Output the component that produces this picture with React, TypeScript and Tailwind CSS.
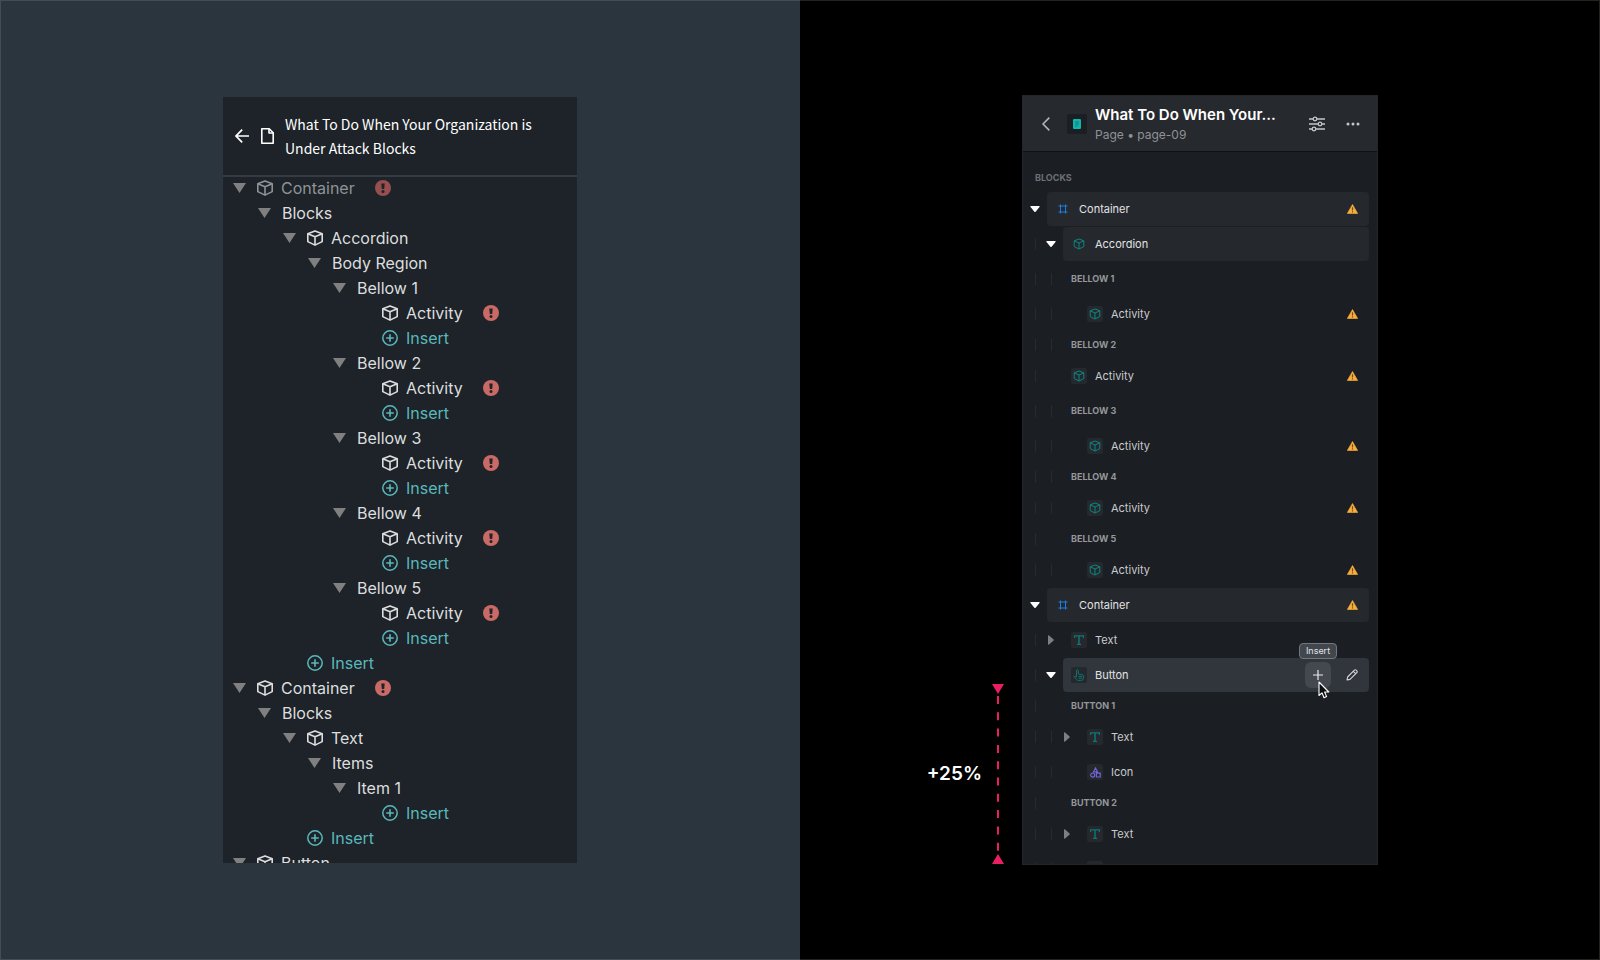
import type { ReactNode } from 'react'

type SvgProps = { className?: string }

const Cube = ({ className }: SvgProps) => (
  <svg viewBox="0 0 16 16" className={className} fill="none" stroke="currentColor" strokeWidth="1.6" strokeLinejoin="round" aria-hidden="true">
    <path d="M8 .9 15.2 3.7v7.900L8 15.100.8 11.600v-7.900z" />
    <path d="M.8 3.700 8 6.700l7.200-3M8 6.700v8.400" />
  </svg>
)

const TriangleDown = ({ className }: SvgProps) => (
  <svg viewBox="0 0 13 10" className={className} fill="currentColor" aria-hidden="true">
    <path d="M0 0h13L6.500 10z" />
  </svg>
)

const ErrorBadge = ({ dim }: { dim?: boolean }) => (
  <svg viewBox="0 0 16 16" className={dim ? 'ml-5 size-4 text-[#964f4e]' : 'ml-5 size-4 text-[#c96a66]'} role="img" aria-label="Error">
    <circle cx="8" cy="8" r="8" fill="currentColor" />
    <path d="M6.300 3.500h3.400L9.200 9H6.800z" fill="#1d2328" />
    <circle cx="8" cy="11.400" r="1.500" fill="#1d2328" />
  </svg>
)

type OldKind = 'block' | 'region' | 'leaf' | 'insert'
type OldItem = { level: number; kind: OldKind; label: string; error?: boolean; dim?: boolean }

const bellows: OldItem[] = [1, 2, 3, 4, 5].flatMap((n): OldItem[] => [
  { level: 4, kind: 'region', label: `Bellow ${n}` },
  { level: 5, kind: 'leaf', label: 'Activity', error: true },
  { level: 5, kind: 'insert', label: 'Insert' },
])

const oldItems: OldItem[] = [
  { level: 0, kind: 'block', label: 'Container', error: true, dim: true },
  { level: 1, kind: 'region', label: 'Blocks' },
  { level: 2, kind: 'block', label: 'Accordion' },
  { level: 3, kind: 'region', label: 'Body Region' },
  ...bellows,
  { level: 2, kind: 'insert', label: 'Insert' },
  { level: 0, kind: 'block', label: 'Container', error: true },
  { level: 1, kind: 'region', label: 'Blocks' },
  { level: 2, kind: 'block', label: 'Text' },
  { level: 3, kind: 'region', label: 'Items' },
  { level: 4, kind: 'region', label: 'Item 1' },
  { level: 5, kind: 'insert', label: 'Insert' },
  { level: 2, kind: 'insert', label: 'Insert' },
  { level: 0, kind: 'block', label: 'Button' },
]

const Slot = ({ children }: { children?: ReactNode }) => (
  <span className="flex w-[25px] shrink-0 items-center justify-center">{children}</span>
)

function OldRow({ item }: { item: OldItem }) {
  const { level, kind, label, error, dim } = item
  const indent = Array.from({ length: level }, (_, i) => <Slot key={i} />)
  if (kind === 'insert') {
    return (
      <li className="flex h-[25px] items-center pl-1">
        {indent}
        <Slot />
        <button type="button" className="flex items-center text-[#5ab8bc]">
          <Slot>
            <svg viewBox="0 0 16 16" className="size-4" fill="none" stroke="currentColor" strokeWidth="1.500" aria-hidden="true">
              <circle cx="8" cy="8" r="7.200" />
              <path d="M8 4.200v7.600M4.200 8h7.600" strokeWidth="1.600" />
            </svg>
          </Slot>
          <span className="pl-1">{label}</span>
        </button>
      </li>
    )
  }
  return (
    <li className={dim ? 'flex h-[25px] items-center pl-1 text-[#8f9396]' : 'flex h-[25px] items-center pl-1 text-[#dcdedf]'}>
      {indent}
      <Slot>
        {kind !== 'leaf' && (
          <button type="button" aria-label={`Collapse ${label}`} className="text-[#808080]">
            <TriangleDown className="h-[10px] w-[13px]" />
          </button>
        )}
      </Slot>
      {kind !== 'region' && (
        <Slot>
          <Cube className="size-4" />
        </Slot>
      )}
      <span className={kind === 'region' ? 'pl-[5px]' : 'pl-1'}>{label}</span>
      {error && <ErrorBadge dim={dim} />}
    </li>
  )
}

function OldPanel() {
  return (
    <div className="h-full w-[354px] overflow-hidden bg-[#1d2328] font-['Inter',sans-serif] text-[16px] leading-6">
      <header className="flex h-20 items-center border-b-2 border-[#343b43] pl-3">
        <button type="button" aria-label="Back" className="text-white">
          <svg viewBox="0 0 14 14" className="size-[14px]" fill="none" stroke="currentColor" strokeWidth="1.700" aria-hidden="true">
            <path d="M7.200.600 1 7l6.200 6.400M1 7h13" />
          </svg>
        </button>
        <svg viewBox="0 0 13 16" className="ml-3 h-4 w-[13px] text-white" fill="none" stroke="currentColor" strokeWidth="1.600" strokeLinejoin="round" aria-hidden="true">
          <path d="M.8.800h7.400l4 4v10.400H.8z" />
          <path d="M8 .800v4.200h4.200" />
        </svg>
        <h1 className="flex-1 pr-8 pl-[11px] font-['Noto_Sans_CJK_SC',sans-serif] text-[14px] leading-6 text-white">
          What To Do When Your Organization is Under Attack Blocks
        </h1>
      </header>
      <ul className="-mt-0.5">
        {oldItems.map((item, i) => (
          <OldRow key={i} item={item} />
        ))}
      </ul>
    </div>
  )
}

type IconName = 'frame' | 'cube' | 'text' | 'hand' | 'shapes'

function BlockIcon({ name }: { name: IconName }) {
  switch (name) {
    case 'frame':
      return (
        <svg viewBox="0 0 10 10" className="size-[10px] text-[#1f7fe0]" fill="none" stroke="currentColor" aria-hidden="true">
          <path d="M2.500.500v9M7.500.500v9M.500 2h9M.500 8h9" />
        </svg>
      )
    case 'cube':
      return (
        <svg viewBox="0 0 12 12" className="size-3 text-[#0f8580]" fill="none" stroke="currentColor" strokeLinejoin="round" aria-hidden="true">
          <path d="M6 1l4.800 1.800v5.800L6 11 1.200 8.600V2.800zM1.200 2.800 6 5l4.800-2.200M6 5v6" />
        </svg>
      )
    case 'text':
      return (
        <svg viewBox="0 0 10 10" className="size-[10px] text-[#0f7571]" fill="none" stroke="currentColor" aria-hidden="true">
          <path d="M.600 3V.800h8.800V3M3 9.400h4" strokeWidth="1.200" />
          <path d="M5 .800v8.600" strokeWidth="1.500" />
        </svg>
      )
    case 'hand':
      return (
        <svg viewBox="0 0 12 12" className="size-3 text-[#0f716d]" fill="none" stroke="currentColor" strokeLinejoin="round" aria-hidden="true">
          <path d="M3.500 8V1.600a.9.900 0 0 1 1.800 0V5l4.400.900c.800.200 1.200.700 1.100 1.500L10.200 10c-.2.900-.8 1.400-1.600 1.400H5.200c-.7 0-1.200-.3-1.600-.8L1 7.600c.5-.8 1.300-.8 2.500.4M5.500 7.500h4M5.500 9.300h3.500" />
        </svg>
      )
    case 'shapes':
      return (
        <svg viewBox="0 0 11 11" className="size-[11px] text-[#7163d6]" fill="none" stroke="currentColor" strokeWidth="1.200" aria-hidden="true">
          <path d="M5.500 1 7.500 4.800H3.500zM6.400 6.200h3.800v3.800H6.400z" />
          <circle cx="2.700" cy="8.100" r="2" />
        </svg>
      )
  }
}

const WarningIcon = () => (
  <svg viewBox="0 0 11 10" className="h-[10px] w-[11px]" role="img" aria-label="Warning">
    <path d="M5.500.500 10.700 9.500H.300z" fill="#f9ae3b" stroke="#f9ae3b" strokeWidth=".600" strokeLinejoin="round" />
    <path d="M5.500 3.200v3.200M5.500 7.300v1.200" stroke="#6b4c1d" strokeWidth="1.200" />
  </svg>
)

type NewItem = {
  level: number
  guides: number
  label?: string
  icon: IconName
  caret?: 'open' | 'closed'
  variant?: 'filled' | 'active'
  warn?: boolean
}
type Heading = { heading: string; guides: number; tall?: boolean }

const newItems: (NewItem | Heading)[] = [
  { level: 0, guides: 0, label: 'Container', icon: 'frame', caret: 'open', variant: 'filled', warn: true },
  { level: 1, guides: 1, label: 'Accordion', icon: 'cube', caret: 'open', variant: 'filled' },
  { heading: 'Bellow 1', guides: 2, tall: true },
  { level: 2, guides: 2, label: 'Activity', icon: 'cube', warn: true },
  { heading: 'Bellow 2', guides: 2 },
  { level: 1, guides: 1, label: 'Activity', icon: 'cube', warn: true },
  { heading: 'Bellow 3', guides: 2, tall: true },
  { level: 2, guides: 2, label: 'Activity', icon: 'cube', warn: true },
  { heading: 'Bellow 4', guides: 2 },
  { level: 2, guides: 2, label: 'Activity', icon: 'cube', warn: true },
  { heading: 'Bellow 5', guides: 1 },
  { level: 2, guides: 2, label: 'Activity', icon: 'cube', warn: true },
  { level: 0, guides: 0, label: 'Container', icon: 'frame', caret: 'open', variant: 'filled', warn: true },
  { level: 1, guides: 1, label: 'Text', icon: 'text', caret: 'closed' },
  { level: 1, guides: 1, label: 'Button', icon: 'hand', caret: 'open', variant: 'active' },
  { heading: 'Button 1', guides: 1 },
  { level: 2, guides: 2, label: 'Text', icon: 'text', caret: 'closed' },
  { level: 2, guides: 2, label: 'Icon', icon: 'shapes' },
  { heading: 'Button 2', guides: 1 },
  { level: 2, guides: 2, label: 'Text', icon: 'text', caret: 'closed' },
  { level: 2, guides: 2, icon: 'shapes' },
]

const Guides = ({ columns, lines }: { columns: number; lines: number }) => (
  <>
    {Array.from({ length: columns }, (_, i) => (
      <span key={i} className="flex w-4 shrink-0 justify-center">
        {i < lines && <span className="h-3 w-px bg-[#272b2f]" />}
      </span>
    ))}
  </>
)

const boxStyles = {
  plain: 'ml-1 flex h-[34px] flex-1 items-center rounded pr-[9px] pl-2 text-[#c9cbce]',
  filled: 'ml-1 flex h-[34px] flex-1 items-center rounded bg-[#25282d] pr-[9px] pl-2 text-[#e1e3e5]',
  active: 'ml-1 flex h-[34px] flex-1 items-center rounded bg-[#31353c] pr-[9px] pl-2 text-[#e1e3e5]',
}

const ActiveActions = () => (
  <>
    <span className="relative mr-[13px] flex">
      <button type="button" aria-label="Insert" className="flex size-[26px] items-center justify-center rounded-md bg-[#444950] text-[#e8eaec]">
        <svg viewBox="0 0 10 10" className="size-[10px]" stroke="currentColor" strokeWidth="1.200" aria-hidden="true">
          <path d="M5 0v10M0 5h10" />
        </svg>
      </button>
      <span role="tooltip" className="absolute bottom-full left-1/2 mb-[3px] flex h-4 w-[38px] -translate-x-1/2 items-center justify-center rounded border border-[#717780] bg-[#42474e] text-[9px] leading-3 text-[#e1e3e5]">
        Insert
      </span>
      <svg viewBox="0 0 12 18" className="absolute top-[19px] left-[13px] z-10 h-[18px] w-3" aria-hidden="true">
        <path d="M1 1v13.500l3-2.700 2 4.900 2.600-1.100-2-4.600h4.200z" fill="#0b0c0e" stroke="#fff" strokeWidth="1.100" strokeLinejoin="round" />
      </svg>
    </span>
    <button type="button" aria-label="Edit" className="flex w-4 justify-center text-[#d5d7da]">
      <svg viewBox="0 0 12 12" className="size-3" fill="none" stroke="currentColor" strokeWidth="1.100" strokeLinejoin="round" aria-hidden="true">
        <path d="M1 11l.6-3L8.400 1.200a1.300 1.300 0 0 1 1.800 0l.6.600a1.300 1.300 0 0 1 0 1.800L4 10.400zM7.300 2.300l2.400 2.400" />
      </svg>
    </button>
  </>
)

function NewRow({ item }: { item: NewItem }) {
  return (
    <li className="mb-px flex items-center pr-2 pl-1">
      <Guides columns={item.level} lines={item.guides} />
      <span className="flex w-4 shrink-0 justify-center">
        {item.caret === 'open' && (
          <button type="button" aria-label={`Collapse ${item.label}`} className="text-white">
            <svg viewBox="0 0 10 6" className="h-[6px] w-[10px]" fill="currentColor" aria-hidden="true">
              <path d="M1 0h8c.700 0 1 .600.500 1.100L5.600 5.700c-.4.400-.8.400-1.200 0L.5 1.100C0 .600.300 0 1 0z" />
            </svg>
          </button>
        )}
        {item.caret === 'closed' && (
          <button type="button" aria-label={`Expand ${item.label}`} className="text-[#7b8087]">
            <svg viewBox="0 0 6 10" className="h-[10px] w-[6px]" fill="currentColor" aria-hidden="true">
              <path d="M0 1v8c0 .700.600 1 1.100.500l4.500-3.900c.4-.4.400-.8 0-1.200L1.100.500C.600 0 0 .300 0 1z" />
            </svg>
          </button>
        )}
      </span>
      <div className={boxStyles[item.variant ?? 'plain']}>
        <span className="flex size-4 shrink-0 items-center justify-center rounded-xs bg-[#25282d]">
          <BlockIcon name={item.icon} />
        </span>
        <span className="flex-1 pl-2">{item.label}</span>
        {item.warn && (
          <span className="flex w-4 justify-center">
            <WarningIcon />
          </span>
        )}
        {item.variant === 'active' && <ActiveActions />}
      </div>
    </li>
  )
}

function HeadingRow({ item }: { item: Heading }) {
  return (
    <li className={item.tall ? 'mb-px flex h-[34px] items-center pl-1' : 'mb-px flex h-[26px] items-center pl-1'}>
      <Guides columns={2} lines={item.guides} />
      <h3 className="pl-3 text-[9px] font-bold text-[#94979b] uppercase">{item.heading}</h3>
    </li>
  )
}

function NewPanel() {
  return (
    <div className="h-full w-[356px] overflow-hidden border border-[#232629] bg-[#1b1e22] font-['Inter',sans-serif] text-[11px] leading-4">
      <header className="flex h-14 items-center border-b border-[#0f1113] bg-[#26292e] pr-4 pl-[19px]">
        <button type="button" aria-label="Back" className="text-[#b4b7bb]">
          <svg viewBox="0 0 8 14" className="h-[14px] w-2" fill="none" stroke="currentColor" strokeWidth="1.500" aria-hidden="true">
            <path d="M7.300.600 1 7l6.300 6.400" />
          </svg>
        </button>
        <span className="ml-[17px] flex size-5 items-center justify-center rounded-xs bg-[#1b1e22]">
          <svg viewBox="0 0 8 10" className="h-[10px] w-2" aria-hidden="true">
            <rect width="8" height="10" rx="1" fill="#12b5aa" />
            <path d="M2 3h4M2 5h4M2 7h2.500" stroke="#0b7f78" />
          </svg>
        </span>
        <div className="flex-1 pt-0.5 pl-2">
          <h2 className="text-[15px] leading-5 font-semibold text-white">What To Do When Your...</h2>
          <p className="text-[12px] leading-5 text-[#8f9297]">Page • page-09</p>
        </div>
        <button type="button" aria-label="Settings" className="text-[#c4c7ca]">
          <svg viewBox="0 0 16 16" className="size-4" fill="none" stroke="currentColor" strokeWidth="1.300" aria-hidden="true">
            <path d="M0 3h4M8 3h8M0 8h9M13 8h3M0 13h3M7 13h9" />
            <circle cx="6" cy="3" r="1.800" />
            <circle cx="11" cy="8" r="1.800" />
            <circle cx="5" cy="13" r="1.800" />
          </svg>
        </button>
        <button type="button" aria-label="More" className="ml-5 text-[#c4c7ca]">
          <svg viewBox="0 0 16 16" className="size-4" fill="currentColor" aria-hidden="true">
            <circle cx="3" cy="8" r="1.500" />
            <circle cx="8" cy="8" r="1.500" />
            <circle cx="13" cy="8" r="1.500" />
          </svg>
        </button>
      </header>
      <h3 className="pt-[18px] pb-1.5 pl-3 text-[9px] font-bold text-[#6d7177] uppercase">Blocks</h3>
      <ul>
        {newItems.map((item, i) =>
          'heading' in item ? <HeadingRow key={i} item={item} /> : <NewRow key={i} item={item} />,
        )}
      </ul>
    </div>
  )
}

const GrowthMark = () => (
  <div className="absolute right-full bottom-px mr-[18px] flex items-center text-white">
    <strong className="mr-[10px] font-['Inter',sans-serif] text-[19px] leading-6 font-semibold">+25%</strong>
    <svg viewBox="0 0 12 180" className="h-[180px] w-3 text-[#e91e63]" fill="currentColor" aria-hidden="true">
      <path d="M0 0h12L6 10zM0 180h12L6 170z" />
      <path d="M6 12v156" stroke="currentColor" strokeWidth="2" strokeDasharray="8 8.300" />
    </svg>
  </div>
)

export default function App() {
  return (
    <main className="grid h-screen grid-cols-2">
      <section className="flex h-screen justify-center bg-[#2b353d] pt-[97px] pb-[97px] shadow-[inset_1px_1px_0_#434d55,inset_0_-1px_0_#434d55]">
        <OldPanel />
      </section>
      <section className="flex h-screen justify-center bg-black py-[95px] shadow-[inset_-1px_-1px_0_#26231f,inset_0_1px_0_#26231f]">
        <div className="relative h-full">
          <NewPanel />
          <GrowthMark />
        </div>
      </section>
    </main>
  )
}
